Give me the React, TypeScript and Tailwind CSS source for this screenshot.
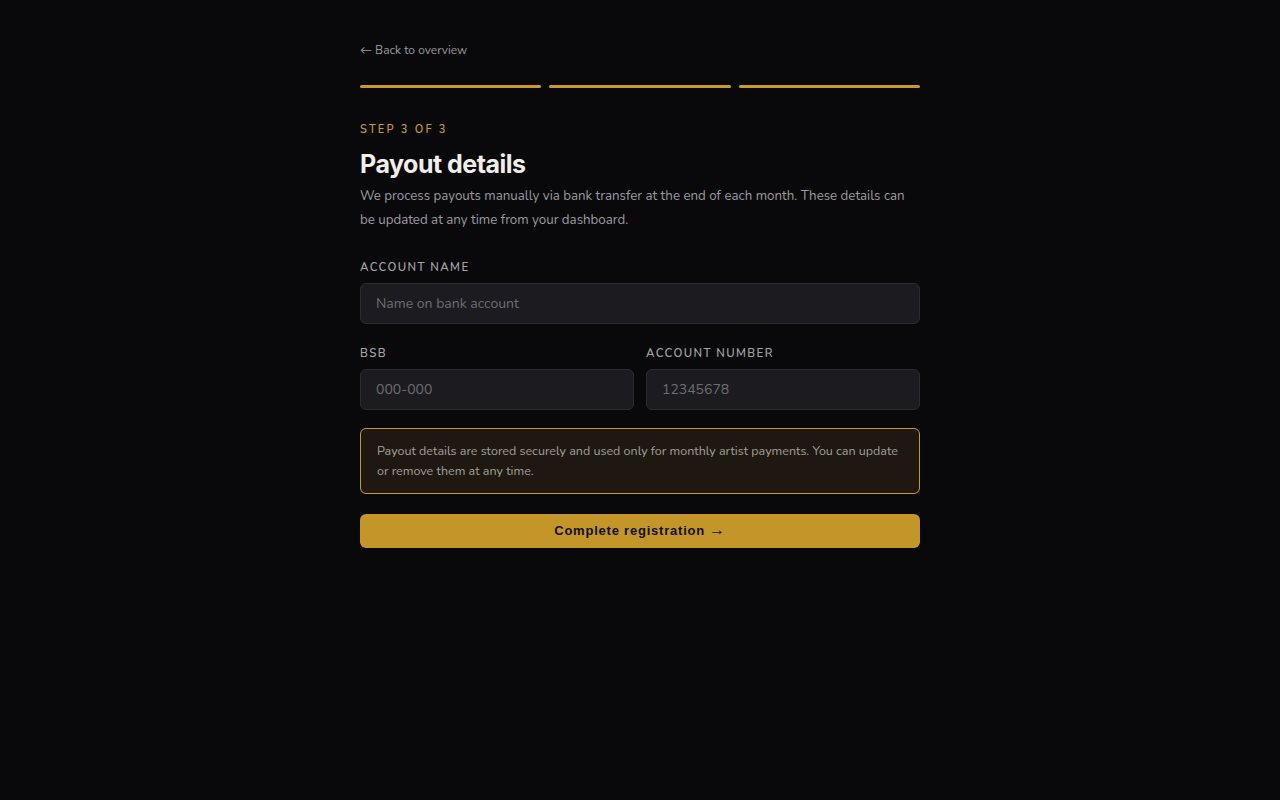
const body = { fontFamily: '"Nunito", "Lato", "Open Sans", sans-serif' };

function Field({ label, placeholder }: { label: string; placeholder: string }) {
  return (
    <div className="flex flex-col">
      <label className="text-[11.5px] font-semibold tracking-[0.12em] uppercase text-[#a3a2a8] leading-4 mb-2">
        {label}
      </label>
      <input
        placeholder={placeholder}
        className="h-[41px] w-full rounded-md border border-[#2c2b31] bg-[#1c1b20] px-[15px] text-[14px] text-[#e6e4df] placeholder:text-[#6e6d73] outline-none"
        style={body}
      />
    </div>
  );
}

export default function App() {
  return (
    <div className="min-h-screen bg-[#09090b]" style={body}>
      <div className="mx-auto w-[560px] pt-[42px]">
        <a href="#" className="block text-[12px] leading-4 text-[#9b9aa0]">
          ← Back to overview
        </a>

        <div className="mt-[27px] flex gap-2">
          {[0, 1, 2].map((i) => (
            <div key={i} className="h-[3px] flex-1 rounded-full bg-[#c9992c]" />
          ))}
        </div>

        <div className="mt-[34px] text-[11px] font-semibold leading-4 tracking-[0.2em] text-[#c9992c]">
          STEP 3 OF 3
        </div>
        <h1
          className="mt-[10px] text-[25px] font-bold leading-8 tracking-[-0.02em] text-[#f2efe8]"
          style={{ fontFamily: 'Inter, "Liberation Sans", sans-serif' }}
        >
          Payout details
        </h1>
        <p className="mt-1 text-[13.3px] leading-6 text-[#9c9ba1]">
          We process payouts manually via bank transfer at the end of each month. These details can be
          updated at any time from your dashboard.
        </p>

        <div className="mt-[27px]">
          <Field label="Account name" placeholder="Name on bank account" />
        </div>

        <div className="mt-[21px] grid grid-cols-2 gap-3">
          <Field label="BSB" placeholder="000-000" />
          <Field label="Account number" placeholder="12345678" />
        </div>

        <div className="mt-[18px] rounded-md border border-[#c9992c] bg-[#1e1811] px-4 py-[12px] text-[12.5px] leading-5 text-[#a29f99]">
          Payout details are stored securely and used only for monthly artist payments. You can update or
          remove them at any time.
        </div>

        <button
          className="mt-5 flex h-[34px] w-full items-center justify-center gap-1 rounded-md bg-[#c4962a] text-[13px] font-bold tracking-[0.06em] text-[#111012]"
          style={{ fontFamily: '"Liberation Sans", Arial, sans-serif' }}
        >
          Complete registration <span className="relative -top-px text-[16px] leading-none font-normal">→</span>
        </button>
      </div>
    </div>
  );
}
